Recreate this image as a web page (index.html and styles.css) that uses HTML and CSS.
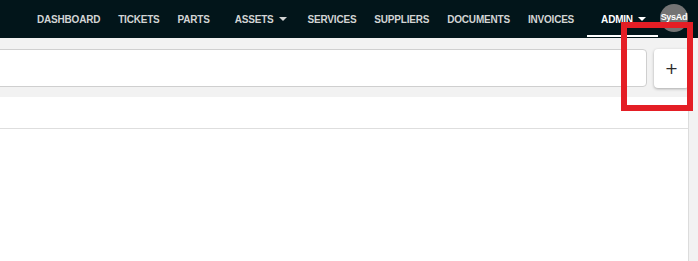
FILE: index.html
```html
<!DOCTYPE html>
<html lang="en">
<head>
    <meta charset="UTF-8">
    <meta name="viewport" content="width=device-width, initial-scale=1.0">
    <title>Parts</title>
    <link rel="stylesheet" href="styles.css">
</head>
<body>

    <nav class="topbar">
        <a class="nav-item" href="#">DASHBOARD</a>
        <a class="nav-item" href="#">TICKETS</a>
        <a class="nav-item" href="#">PARTS</a>
        <a class="nav-item dropdown" href="#">ASSETS <span class="caret"></span></a>
        <a class="nav-item" href="#">SERVICES</a>
        <a class="nav-item" href="#">SUPPLIERS</a>
        <a class="nav-item" href="#">DOCUMENTS</a>
        <a class="nav-item" href="#">INVOICES</a>
        <a class="nav-item dropdown active" href="#">ADMIN <span class="caret"></span></a>
        <div class="avatar">SysAd</div>
    </nav>

    <main class="content">
        <div class="toolbar">
            <input class="search" type="text">
            <button class="add-btn">+</button>
        </div>

        <div class="panel">
            <div class="panel-head"></div>
        </div>
    </main>

    <div class="highlight"></div>

</body>
</html>
```

FILE: styles.css
```css
* {
    box-sizing: border-box;
    margin: 0;
    padding: 0;
}
body {
    font-family: "Liberation Sans", Arial, sans-serif;
    background-color: #f2f2f2;
    height: 100vh;
    overflow: hidden;
    display: flex;
    flex-direction: column;
}
.topbar {
    height: 38px;
    flex-shrink: 0;
    background-color: #02151a;
    display: flex;
    align-items: center;
    padding-left: 28px;
}
.nav-item {
    position: relative;
    height: 38px;
    display: flex;
    align-items: center;
    gap: 5px;
    padding: 0 9px;
    color: #d2d4d4;
    font-size: 10px;
    font-weight: bold;
    text-decoration: none;
    letter-spacing: -0.2px;
}
.nav-item.dropdown {
    padding: 0 12px 0 16px;
}
.nav-item.active {
    color: #fff;
    margin-left: 4px;
    padding-left: 14px;
    padding-right: 12px;
}
.nav-item.active::after {
    content: "";
    position: absolute;
    left: 0;
    right: 0;
    bottom: 1px;
    height: 2px;
    background-color: #fff;
}
.caret {
    width: 0;
    height: 0;
    border-left: 4px solid transparent;
    border-right: 4px solid transparent;
    border-top: 4px solid currentColor;
}
.avatar {
    width: 28px;
    height: 28px;
    margin-left: 2px;
    margin-top: -2px;
    border-radius: 50%;
    background-color: #747474;
    color: #fff;
    font-size: 9px;
    font-weight: bold;
    letter-spacing: -0.3px;
    display: flex;
    justify-content: center;
    align-items: center;
    padding-bottom: 2px;
    white-space: nowrap;
}
.content {
    flex: 1;
    display: flex;
    flex-direction: column;
    padding: 11px 9px 0 0;
}
.toolbar {
    display: flex;
    gap: 7px;
    height: 39px;
}
.search {
    flex: 1;
    height: 38px;
    margin-left: -10px;
    border: 1px solid #cfcfcf;
    border-radius: 4px;
    background-color: #fff;
}
.add-btn {
    width: 35px;
    height: 39px;
    border: none;
    border-radius: 4px;
    background-color: #fff;
    box-shadow: 0 1px 3px rgba(0, 0, 0, 0.3);
    color: #2b2b2b;
    font-size: 16px;
    font-family: "DejaVu Sans", sans-serif;
}
.panel {
    flex: 1;
    margin-top: 9px;
    margin-left: -10px;
    background-color: #fff;
    border-right: 1px solid #dcdcdc;
}
.panel-head {
    height: 32px;
    border-bottom: 1px solid #dedede;
}
.highlight {
    position: absolute;
    left: 621px;
    top: 22px;
    width: 72px;
    height: 89px;
    border: 6px solid #e41e25;
}
```
